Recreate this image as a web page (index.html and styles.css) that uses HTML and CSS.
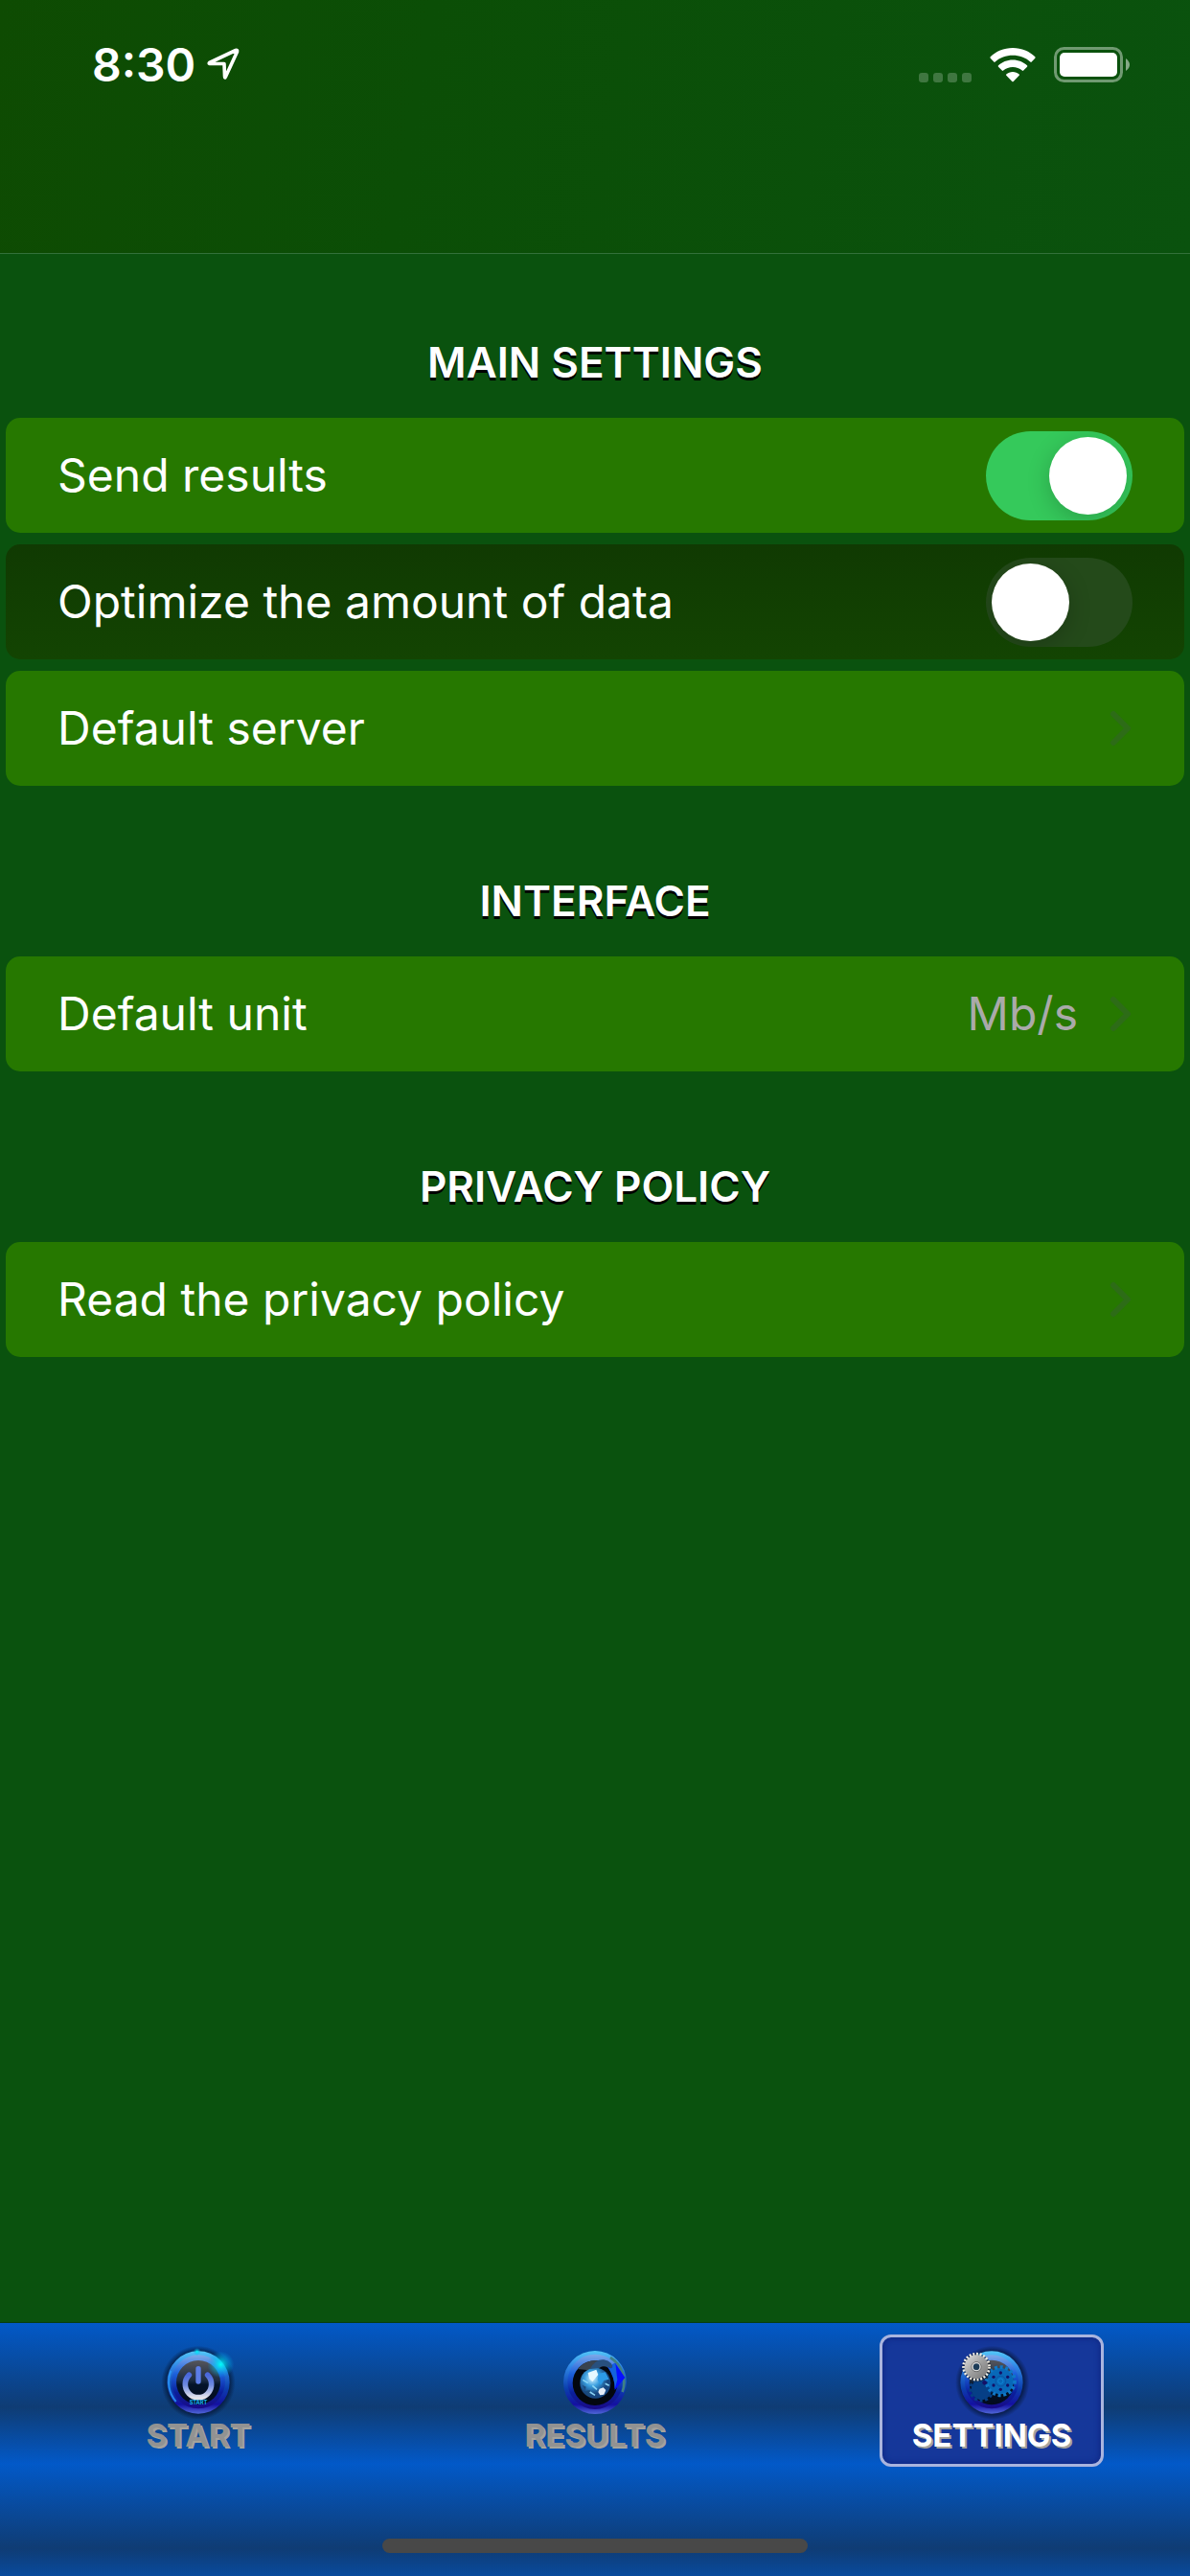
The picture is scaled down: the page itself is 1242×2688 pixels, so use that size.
FILE: index.html
```html
<!DOCTYPE html>
<html lang="en">
<head>
    <meta charset="UTF-8">
    <meta name="viewport" content="width=device-width, initial-scale=1.0">
    <title>Settings</title>
    <link rel="stylesheet" href="styles.css">
</head>
<body>
    <header class="top-bar">
        <div class="status-bar">
            <div class="status-left">
                <span class="time">8:30</span>
                <svg class="location" width="34" height="34" viewBox="0 0 34 34" aria-hidden="true">
                    <path d="M2.5 15.5 L30 2.5 Q32 2 31.500 4 L19.500 30 Q18.500 32 18.500 29.500 L18 16.500 L4 16.500 Q1.500 16.500 2.500 15.500 Z" fill="none" stroke="#fff" stroke-width="3.600" stroke-linejoin="round"/>
                </svg>
            </div>
            <div class="status-right">
                <svg width="55" height="38" viewBox="0 0 55 38" aria-hidden="true">
                    <g fill="#fff" fill-opacity=".22">
                        <rect x="0" y="27" width="10" height="10" rx="3"/>
                        <rect x="15" y="27" width="10" height="10" rx="3"/>
                        <rect x="30" y="27" width="10" height="10" rx="3"/>
                        <rect x="45" y="27" width="10" height="10" rx="3"/>
                    </g>
                </svg>
                <svg width="48" height="38" viewBox="0 0 48 38" aria-hidden="true">
                    <g fill="#fff">
                        <path d="M24 1 C33.500 1 41.500 4.500 47.300 10.300 Q48 11 47.300 11.800 L43.700 15.600 Q43 16.200 42.300 15.500 C37.500 11.200 31 8.800 24 8.800 S10.500 11.200 5.700 15.500 Q5 16.200 4.300 15.600 L.7 11.800 Q0 11 .7 10.300 C6.500 4.500 14.500 1 24 1 Z"/>
                        <path d="M24 13.500 C30 13.500 35.200 15.800 39 19.300 Q39.700 20 39 20.700 L35.200 24.600 Q34.500 25.300 33.800 24.600 C31 22.300 27.800 21 24 21 S17 22.300 14.200 24.600 Q13.500 25.300 12.800 24.600 L9 20.700 Q8.300 20 9 19.300 C12.800 15.800 18 13.500 24 13.500 Z"/>
                        <path d="M24 26 C26.600 26 28.900 27 30.700 28.500 Q31.400 29.100 30.700 29.800 L24.700 36 Q24 36.700 23.300 36 L17.300 29.800 Q16.600 29.100 17.300 28.500 C19.100 27 21.400 26 24 26 Z"/>
                    </g>
                </svg>
                <svg width="80" height="38" viewBox="0 0 80 38" aria-hidden="true">
                    <rect x="1.500" y="1.500" width="69" height="34" rx="9" fill="none" stroke="#fff" stroke-opacity=".42" stroke-width="3"/>
                    <rect x="6" y="6" width="60" height="25" rx="5" fill="#fff"/>
                    <path d="M75 12 Q79 15 79 18.500 T75 25 Z" fill="#fff" fill-opacity=".5"/>
                </svg>
            </div>
        </div>
    </header>

    <main class="settings">
        <section>
            <h2>Main settings</h2>
            <ul class="rows">
                <li>
                    <label class="row">
                        <span>Send results</span>
                        <input type="checkbox" class="switch" role="switch" checked>
                    </label>
                </li>
                <li>
                    <label class="row row-dark">
                        <span>Optimize the amount of data</span>
                        <input type="checkbox" class="switch" role="switch">
                    </label>
                </li>
                <li>
                    <a class="row" href="#server">
                        <span>Default server</span>
                        <svg class="chevron" viewBox="0 0 24 38" aria-hidden="true"><path d="M4 4 L19 19 L4 34"/></svg>
                    </a>
                </li>
            </ul>
        </section>

        <section>
            <h2>Interface</h2>
            <ul class="rows">
                <li>
                    <a class="row" href="#unit">
                        <span>Default unit</span>
                        <span class="value">Mb/s</span>
                        <svg class="chevron" viewBox="0 0 24 38" aria-hidden="true"><path d="M4 4 L19 19 L4 34"/></svg>
                    </a>
                </li>
            </ul>
        </section>

        <section>
            <h2>Privacy policy</h2>
            <ul class="rows">
                <li>
                    <a class="row" href="#privacy">
                        <span>Read the privacy policy</span>
                        <svg class="chevron" viewBox="0 0 24 38" aria-hidden="true"><path d="M4 4 L19 19 L4 34"/></svg>
                    </a>
                </li>
            </ul>
        </section>
    </main>

    <footer class="tab-bar">
        <!-- Shared gradients for the tab icons -->
        <svg class="defs" width="0" height="0" aria-hidden="true">
            <defs>
                <linearGradient id="ring" x1="0" y1="0" x2="0" y2="1">
                    <stop offset="0" stop-color="#55c8f8"/>
                    <stop offset=".25" stop-color="#2f86e6"/>
                    <stop offset=".6" stop-color="#0b3fae"/>
                    <stop offset=".85" stop-color="#1410a0"/>
                    <stop offset="1" stop-color="#4f66d8"/>
                </linearGradient>
                <linearGradient id="innerRing" x1="0" y1="0" x2="0" y2="1">
                    <stop offset="0" stop-color="#7fa9e8"/>
                    <stop offset=".35" stop-color="#1c62dc"/>
                    <stop offset=".7" stop-color="#0a1f9c"/>
                    <stop offset="1" stop-color="#1a0a86"/>
                </linearGradient>
                <linearGradient id="disc" x1="0" y1="0" x2="0" y2="1">
                    <stop offset="0" stop-color="#55565c"/>
                    <stop offset=".45" stop-color="#1c2c44"/>
                    <stop offset=".55" stop-color="#04142a"/>
                    <stop offset="1" stop-color="#020a1c"/>
                </linearGradient>
                <radialGradient id="shade">
                    <stop offset=".8" stop-color="#041430" stop-opacity=".9"/>
                    <stop offset="1" stop-color="#041430" stop-opacity="0"/>
                </radialGradient>
                <radialGradient id="flare">
                    <stop offset="0" stop-color="#00fff6"/>
                    <stop offset=".3" stop-color="#00e0f4" stop-opacity=".7"/>
                    <stop offset="1" stop-color="#00a8f0" stop-opacity="0"/>
                </radialGradient>
                <linearGradient id="power" x1="0" y1="0" x2="0" y2="1">
                    <stop offset="0" stop-color="#4a68dc"/>
                    <stop offset=".45" stop-color="#6f8be0"/>
                    <stop offset="1" stop-color="#e4e4ec"/>
                </linearGradient>
                <radialGradient id="globe" cx=".4" cy=".35">
                    <stop offset="0" stop-color="#d5f2ff"/>
                    <stop offset=".5" stop-color="#3a9fe0"/>
                    <stop offset="1" stop-color="#17467f"/>
                </radialGradient>
                <linearGradient id="steel" x1="0" y1="0" x2="1" y2="1">
                    <stop offset="0" stop-color="#e2e2e2"/>
                    <stop offset=".5" stop-color="#a0a0a0"/>
                    <stop offset="1" stop-color="#747474"/>
                </linearGradient>
            </defs>
        </svg>

        <nav class="tabs">
            <a class="tab" href="#start">
                <svg class="tab-icon" viewBox="0 0 240 240" aria-hidden="true">
                    <circle cx="120" cy="121" r="116" fill="url(#shade)"/>
                    <circle cx="120" cy="120" r="98" fill="url(#ring)"/>
                    <circle cx="120" cy="118" r="84" fill="url(#innerRing)"/>
                    <path d="M34 84 A94 94 0 0 0 50 180" fill="none" stroke="#2aa0ff" stroke-width="6" opacity=".8"/>
                    <circle cx="120" cy="120" r="69" fill="url(#disc)"/>
                    <path d="M91 97 A41 41 0 1 0 149 97" fill="none" stroke="url(#power)" stroke-width="17" stroke-linecap="round"/>
                    <rect x="112" y="69" width="16" height="56" rx="8" fill="#5c7de8"/>
                    <text x="120" y="190" class="icon-text">START</text>
                    <circle cx="190" cy="64" r="42" fill="url(#flare)"/>
                    <circle cx="116" cy="24" r="12" fill="url(#flare)"/>
                </svg>
                <span>Start</span>
            </a>
            <a class="tab" href="#results">
                <svg class="tab-icon" viewBox="0 0 240 240" aria-hidden="true">
                    <circle cx="120" cy="120" r="99" fill="url(#ring)"/>
                    <circle cx="120" cy="118" r="86" fill="url(#innerRing)"/>
                    <path d="M168 42 A92 92 0 0 1 206 150" fill="none" stroke="#3f7f86" stroke-width="8"/>
                    <circle cx="120" cy="122" r="70" fill="#03070f"/>
                    <path d="M66 78 A70 70 0 0 1 156 60 L120 84 Z" fill="#39434f"/>
                    <circle cx="121" cy="122" r="48" fill="url(#globe)"/>
                    <path d="M98 90 L124 80 L130 96 L112 118 L102 108 Z" fill="#e6f8ff"/>
                    <path d="M132 92 L152 88 L164 110 L148 114 L138 128 L128 112 Z" fill="#2c9ae6"/>
                    <path d="M134 140 L146 136 L154 144 L148 158 L136 160 L130 150 Z" fill="#e4ecf6"/>
                    <path d="M80 128 L92 134 L88 148 L104 144 L108 158 L98 162 Z" fill="#1b4a7c"/>
                    <path d="M82 112 L98 122 M112 130 L126 142 M104 150 L120 160 M152 124 L164 130" stroke="#8bd4f4" stroke-width="5"/>
                    <path d="M104 78 Q122 46 148 49 Q176 54 180 84 L172 84 Q154 62 132 74 Q120 76 104 78 Z" fill="#28507e"/>
                    <path d="M160 72 Q178 82 174 64 L184 60 L214 105 L182 144 Q184 106 160 72 Z" fill="#0710ff"/>
                    <path d="M160 72 Q178 82 174 64 L184 60 L190 112 L182 140 Q182 104 160 72 Z" fill="#1463dc"/>
                </svg>
                <span>Results</span>
            </a>
            <a class="tab tab-active" href="#settings" aria-current="page">
                <svg class="tab-icon" viewBox="0 0 240 240" aria-hidden="true">
                    <circle cx="122" cy="121" r="116" fill="url(#shade)"/>
                    <circle cx="120" cy="120" r="98" fill="url(#ring)"/>
                    <circle cx="120" cy="118" r="84" fill="url(#innerRing)"/>
                    <circle cx="120" cy="120" r="70" fill="url(#disc)"/>
                    <circle cx="88" cy="142" r="32" fill="#063f86"/>
                    <circle cx="88" cy="142" r="35" fill="none" stroke="#063f86" stroke-width="9" stroke-dasharray="9 8"/>
                    <circle cx="148" cy="116" r="41" fill="#0868b8"/>
                    <circle cx="148" cy="116" r="44" fill="none" stroke="#0f78c8" stroke-width="11" stroke-dasharray="9 8"/>
                    <circle cx="148" cy="116" r="16" fill="none" stroke="#0a54a4" stroke-width="3"/>
                    <circle cx="148" cy="116" r="8" fill="none" stroke="#0f86d6" stroke-width="3"/>
                    <g fill="#141066">
                        <circle cx="148" cy="90" r="5"/>
                        <circle cx="170" cy="103" r="5"/>
                        <circle cx="170" cy="129" r="5"/>
                        <circle cx="148" cy="142" r="5"/>
                        <circle cx="126" cy="129" r="5"/>
                        <circle cx="126" cy="103" r="5"/>
                        <circle cx="98" cy="121" r="7"/>
                    </g>
                    <circle cx="74" cy="74" r="44" fill="#10131c" opacity=".5"/>
                    <circle cx="72" cy="71" r="40" fill="none" stroke="#f0ece2" stroke-width="9" stroke-dasharray="6 5"/>
                    <circle cx="72" cy="71" r="37" fill="url(#steel)"/>
                    <circle cx="72" cy="71" r="15" fill="none" stroke="#4a4a4a" stroke-width="2"/>
                    <circle cx="72" cy="71" r="12" fill="#1d3c58" stroke="#d8d8d8" stroke-width="4"/>
                </svg>
                <span>Settings</span>
            </a>
        </nav>
        <div class="home-indicator"></div>
    </footer>
</body>
</html>
```
FILE: styles.css
```css
/* General Page Styles */
* {
    box-sizing: border-box;
}

body {
    font-family: Inter, "Liberation Sans", sans-serif;
    background-color: #0a520e;
    color: #fff;
    margin: 0;
    min-height: 100vh;
    display: flex;
    flex-direction: column;
}

a {
    color: inherit;
    text-decoration: none;
}

/* Header with the phone status bar */
.top-bar {
    height: 265px;
    background: linear-gradient(100deg, #0e4b02, #0b4e06 35%, #0a520e);
    border-bottom: 1px solid #33703a;
}

.status-bar {
    display: flex;
    justify-content: space-between;
    padding: 48px 62px 0 96px;
}

.status-left,
.status-right {
    display: flex;
    align-items: center;
    height: 40px;
}

.status-left {
    gap: 12px;
}

.status-right {
    gap: 19px;
}

.location {
    margin-bottom: 2px;
}

.time {
    font-size: 48px;
    font-weight: 600;
    line-height: 40px;
}

/* Settings list */
.settings {
    flex: 1;
}

section + section {
    margin-top: 7px;
}

h2 {
    margin: 0;
    padding: 83px 0 28px;
    font-size: 44px;
    font-weight: 600;
    line-height: 60px;
    text-align: center;
    text-transform: uppercase;
    text-shadow: 0 3px 0 #000;
}

.rows {
    display: flex;
    flex-direction: column;
    gap: 12px;
    margin: 0;
    padding: 0 6px;
    list-style: none;
}

.row {
    display: flex;
    align-items: center;
    justify-content: space-between;
    min-height: 120px;
    padding: 0 54px;
    font-size: 48px;
    line-height: 60px;
    background-color: #267800;
    border-radius: 15px;
}

.row-dark {
    background: linear-gradient(#103a02, #134402);
}

.value {
    margin-left: auto;
    margin-right: 33px;
    color: #aaa;
}

.chevron {
    width: 24px;
    height: 38px;
    fill: none;
    stroke: #2d6c17;
    stroke-width: 6;
    stroke-linecap: round;
    stroke-linejoin: round;
}

/* Switches */
.switch {
    appearance: none;
    width: 153px;
    height: 93px;
    margin: 0;
    padding: 6px;
    border-radius: 47px;
    background-color: #244a1a;
    overflow: hidden;
}

.switch::before {
    content: "";
    display: block;
    width: 81px;
    height: 81px;
    border-radius: 50%;
    background-color: #fff;
    box-shadow: 0 6px 24px rgba(0, 0, 0, 0.2);
}

.switch:checked {
    background-color: #35c95b;
}

.switch:checked::before {
    margin-left: auto;
}

/* Bottom tabs */
.tab-bar {
    padding: 12px 0 24px;
    border-top: 1px solid #083d12;
    background: repeating-linear-gradient(#0259c8 0, #0f3c74 88px, #0259c8 147px);
}

.defs {
    display: block;
}

.tabs {
    display: grid;
    grid-template-columns: repeat(3, 1fr);
    justify-items: center;
}

.tab {
    display: flex;
    flex-direction: column;
    align-items: center;
    width: 234px;
    padding: 7px 0 15px;
    border: 3px solid transparent;
    border-radius: 12px;
    color: #929292;
    font-size: 33px;
    font-weight: 700;
    line-height: 30px;
    text-transform: uppercase;
    text-shadow: 2px 2px 0 #a5a39c;
}

.tab-active {
    color: #fff;
    background-color: #15379a;
    border-color: #a9b4de;
    box-shadow: inset 0 0 5px 2px #102a88;
}

.tab-icon {
    width: 80px;
    height: 80px;
}

.icon-text {
    fill: #16b4f4;
    font-size: 17px;
    text-anchor: middle;
    text-shadow: none;
}

.home-indicator {
    width: 444px;
    height: 15px;
    margin: 75px auto 0;
    border-radius: 8px;
    background-color: #484848;
}
```
